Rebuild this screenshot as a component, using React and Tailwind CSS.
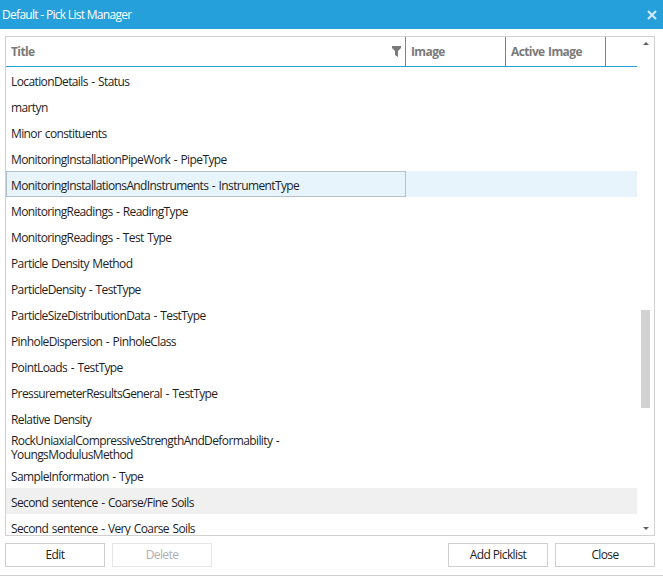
const rows = [
  "LocationDetails - Status",
  "martyn",
  "Minor constituents",
  "MonitoringInstallationPipeWork - PipeType",
  "MonitoringInstallationsAndInstruments - InstrumentType",
  "MonitoringReadings - ReadingType",
  "MonitoringReadings - Test Type",
  "Particle Density Method",
  "ParticleDensity - TestType",
  "ParticleSizeDistributionData - TestType",
  "PinholeDispersion - PinholeClass",
  "PointLoads - TestType",
  "PressuremeterResultsGeneral - TestType",
  "Relative Density",
  "RockUniaxialCompressiveStrengthAndDeformability - YoungsModulusMethod",
  "SampleInformation - Type",
  "Second sentence - Coarse/Fine Soils",
  "Second sentence - Very Coarse Soils",
];

const Row = ({ title, index }) => {
  const selected = index === 4;
  const hovered = index === 16;
  const tall = index === 14;
  return (
    <div className={`flex shrink-0 ${tall ? "h-[31px]" : "h-[26px]"} ${selected ? "bg-[#e8f4fb]" : ""} ${hovered ? "bg-[#f0f0f0]" : ""}`}>
      <div className={`flex w-[400px] items-center leading-[14px] ${selected ? "border border-[#b4c0c8] pl-[4px]" : "pl-[5px]"}`}>
        <span className="w-[380px] pt-[3px]">{title}</span>
      </div>
    </div>
  );
};

const Btn = ({ label, disabled }) => (
  <button className={`h-[24px] w-[100px] border bg-white ${disabled ? "border-[#e6e6e6] text-[#b0b0b0]" : "border-[#cfcfcf] text-[#222]"}`}>
    {label}
  </button>
);

export default function App() {
  return (
    <div className="flex h-[577px] w-[663px] flex-col overflow-hidden bg-white font-['Open_Sans',sans-serif] text-[12px] tracking-[-0.61px] text-[#1e1e1e] [word-spacing:1px]">
      <div className="flex h-[29px] shrink-0 items-center justify-between bg-[#25a0da] pl-[2px] pr-[5px] text-white">
        <span className="pt-[1px] tracking-[-0.7px] [word-spacing:0px]">Default - Pick List Manager</span>
        <svg width="12" height="12" viewBox="0 0 12 12" className="opacity-80">
          <path d="M2 2l8 8M10 2l-8 8" stroke="#ffffff" strokeWidth="2" />
        </svg>
      </div>

      <div className="ml-[5px] mt-[7px] flex h-[500px] w-[650px] shrink-0 overflow-hidden border border-[#d0d0d0]">
        <div className="flex w-[631px] flex-col overflow-hidden">
          <div className="flex h-[30px] shrink-0 border-b border-[#25a0da] font-bold text-[#7a7a7a]">
            <div className="flex w-[400px] items-center justify-between border-r border-[#25a0da] pl-[5px] pr-[4px]">
              <span className="pt-[1px]">Title</span>
              <svg width="9" height="11" viewBox="0 0 9 11">
                <path d="M0 0h9v2L6 5v6L3 9V5L0 2z" fill="#7a7a7a" />
              </svg>
            </div>
            <div className="flex w-[100px] items-center border-r border-[#25a0da] pl-[5px] pt-[1px]">Image</div>
            <div className="flex w-[100px] items-center border-r border-[#25a0da] pl-[5px] pt-[1px]">Active Image</div>
          </div>
          <div className="flex min-h-0 flex-1 flex-col overflow-hidden">
            {rows.map((title, i) => (
              <Row key={title} title={title} index={i} />
            ))}
          </div>
        </div>
        <div className="ml-[4px] flex w-[9px] flex-col items-center py-[5px]">
          <div className="h-0 w-0 border-x-[3px] border-b-[3px] border-x-transparent border-b-[#606060]" />
          <div className="mt-[265px] h-[98px] w-[9px] bg-[#d2d2d2]" />
          <div className="mt-auto h-0 w-0 border-x-[3px] border-t-[3px] border-x-transparent border-t-[#606060]" />
        </div>
      </div>

      <div className="ml-[5px] mt-[7px] flex w-[650px] shrink-0 items-center gap-[7px]">
        <Btn label="Edit" />
        <Btn label="Delete" disabled />
        <div className="flex-1" />
        <Btn label="Add Picklist" />
        <Btn label="Close" />
      </div>

      <div className="mt-[8px] h-[1px] shrink-0 bg-[#d0d0d0]" />
    </div>
  );
}
